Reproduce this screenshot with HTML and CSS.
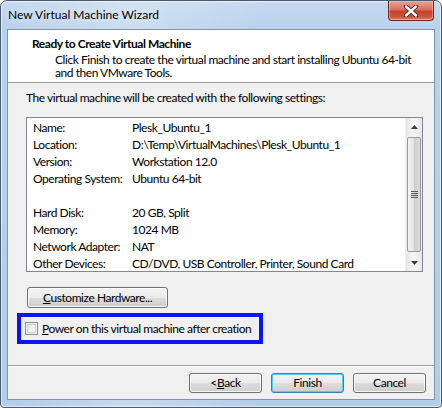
FILE: index.html
```html
<!DOCTYPE html>
<html>
<head>
<meta charset="utf-8">
<link rel="stylesheet" href="styles.css">
</head>
<body>
<div class="window">
  <div class="titlebar">
    <span class="title">New Virtual Machine Wizard</span>
    <div class="close">
      <svg width="16" height="12" viewBox="0 0 16 12">
        <path d="M3 1.5 L13 10.5 M13 1.5 L3 10.5" stroke="#3a2420" stroke-width="4.2" stroke-linecap="round"/>
        <path d="M3 1.5 L13 10.5 M13 1.5 L3 10.5" stroke="#ffffff" stroke-width="2.4" stroke-linecap="round"/>
      </svg>
    </div>
  </div>
  <div class="client">
    <div class="header">
      <div class="h-title">Ready to Create Virtual Machine</div>
      <div class="h-desc">Click Finish to create the virtual machine and start installing Ubuntu 64-bit<br>and then VMware Tools.</div>
    </div>
    <div class="body">
      <div class="intro">The virtual machine will be created with the following settings:</div>
      <div class="listbox">
        <div class="rows">
          <div class="row"><span class="k">Name:</span><span>Plesk_Ubuntu_1</span></div>
          <div class="row"><span class="k">Location:</span><span>D:\Temp\VirtualMachines\Plesk_Ubuntu_1</span></div>
          <div class="row"><span class="k">Version:</span><span>Workstation 12.0</span></div>
          <div class="row"><span class="k">Operating System:</span><span>Ubuntu 64-bit</span></div>
          <div class="row"></div>
          <div class="row"><span class="k">Hard Disk:</span><span>20 GB, Split</span></div>
          <div class="row"><span class="k">Memory:</span><span>1024 MB</span></div>
          <div class="row"><span class="k">Network Adapter:</span><span>NAT</span></div>
          <div class="row"><span class="k">Other Devices:</span><span>CD/DVD, USB Controller, Printer, Sound Card</span></div>
        </div>
        <div class="scrollbar">
          <div class="arrow"><svg width="7" height="4" viewBox="0 0 7 4"><path d="M0 4 L3.5 0 L7 4 Z" fill="#3c3c3c"/></svg></div>
          <div class="thumb">
            <div class="grip"><i></i><i></i><i></i><i></i></div>
          </div>
          <div class="arrow down"><svg width="7" height="4" viewBox="0 0 7 4"><path d="M0 0 L3.5 4 L7 0 Z" fill="#3c3c3c"/></svg></div>
        </div>
      </div>
      <div class="btn custom"><u>C</u>ustomize Hardware...</div>
      <div class="highlight">
        <span class="checkbox"></span>
        <span class="cb-label"><u>P</u>ower on this virtual machine after creation</span>
      </div>
    </div>
    <div class="footer">
      <div class="btn nav">&lt; <u>B</u>ack</div>
      <div class="btn nav default">Finish</div>
      <div class="btn nav">Cancel</div>
    </div>
  </div>
</div>
</body>
</html>
```
FILE: styles.css
```css
* { box-sizing: border-box; }
html, body { margin: 0; padding: 0; background: #ffffff; }
body {
  font-family: Lato, "Noto Sans", sans-serif;
  font-size: 12px;
  color: #000;
}
.window {
  width: 442px;
  height: 408px;
  border: 1px solid #4a5a6e;
  border-radius: 7px 7px 4px 4px;
  background:
    linear-gradient(90deg, rgba(255,255,255,0) 0, rgba(255,255,255,0.25) 30%, rgba(255,255,255,0) 60%),
    linear-gradient(180deg, #c4d9ef 0, #b8d1ec 30px, #b2cde9 100%);
  padding: 0 6px 7px 6px;
  display: flex;
  flex-direction: column;
  box-shadow: inset 0 0 0 1px rgba(255,255,255,0.6);
}
.titlebar {
  height: 28px;
  display: flex;
  align-items: flex-start;
  justify-content: space-between;
}
.title {
  margin-top: 6px;
  margin-left: 1px;
  color: #000;
  text-shadow: 0 0 8px rgba(255,255,255,0.9);
}
.close {
  width: 46px;
  height: 20px;
  margin-right: 1px;
  border: 1px solid #6e2b22;
  border-top: none;
  border-radius: 0 0 4px 4px;
  background: linear-gradient(180deg, #e8a493 0, #d9705d 45%, #c2432c 55%, #d0553c 85%, #e08a70 100%);
  display: flex;
  align-items: center;
  justify-content: center;
  box-shadow: inset 0 0 0 1px rgba(255,200,180,0.5);
}
.client {
  flex: 1;
  border: 1px solid #8394a9;
  background: #f0f0f0;
  display: flex;
  flex-direction: column;
  letter-spacing: -0.45px;
}
.header {
  height: 53px;
  background: #ffffff;
  border-bottom: 1px solid #a0a0a0;
  padding: 6px 0 0 24px;
  white-space: nowrap;
}
.h-title {
  font-weight: bold;
  line-height: 16px;
}
.h-desc {
  padding-left: 23px;
  line-height: 13px;
  margin-top: 1px;
}
.body {
  flex: 1;
  display: flex;
  flex-direction: column;
  align-items: flex-start;
  padding: 7px 10px 0 18px;
}
.intro {
  line-height: 16px;
  white-space: nowrap;
}
.listbox {
  margin-top: 11px;
  width: 397px;
  height: 155px;
  border: 1px solid #828790;
  background: #ffffff;
  display: flex;
}
.rows {
  flex: 1;
  padding: 1px 0 0 6px;
}
.row {
  height: 17px;
  line-height: 17px;
  display: flex;
  white-space: nowrap;
}
.k { width: 99px; flex-shrink: 0; }
.scrollbar {
  width: 17px;
  display: flex;
  flex-direction: column;
  background: linear-gradient(90deg, #e6e6e6, #f4f4f4 40%, #f4f4f4 60%, #e6e6e6);
  border-left: 1px solid #efefef;
}
.arrow {
  height: 17px;
  display: flex;
  align-items: center;
  justify-content: center;
}
.thumb {
  flex: 1;
  margin: 2px 1px;
  border: 1px solid #9a9a9a;
  border-radius: 2px;
  background: linear-gradient(90deg, #f4f4f4 0, #e4e4e4 45%, #cfcfcf 55%, #dcdcdc 100%);
  display: flex;
  align-items: center;
  justify-content: center;
}
.grip { display: flex; flex-direction: column; gap: 1px; }
.grip i {
  display: block;
  width: 7px;
  height: 1px;
  background: #5a5a5a;
}
.btn {
  height: 21px;
  border: 1px solid #707070;
  border-radius: 3px;
  background: linear-gradient(180deg, #f2f2f2 0, #ebebeb 50%, #dddddd 51%, #cfcfcf 100%);
  box-shadow: inset 0 0 0 1px rgba(255,255,255,0.8);
  display: flex;
  align-items: center;
  justify-content: center;
  line-height: 16px;
  white-space: nowrap;
}
.custom {
  margin-top: 15px;
  margin-left: 1px;
  width: 141px;
}
.highlight {
  margin-top: 5px;
  margin-left: -9px;
  width: 246px;
  height: 31px;
  border: 4px solid #0a14f5;
  display: flex;
  align-items: center;
  padding-left: 4px;
}
.cb-label { white-space: nowrap; }
.checkbox {
  width: 13px;
  height: 13px;
  flex-shrink: 0;
  border: 1px solid #8e8f8f;
  background: linear-gradient(135deg, #dcdcdc 0, #f2f2f2 50%, #ffffff 100%);
  box-shadow: inset 0 0 0 1px #f4f4f4, inset 0 0 0 2px #cdcdcd;
  margin-right: 4px;
}
.footer {
  height: 34px;
  border-top: 1px solid #a0a0a0;
  box-shadow: inset 0 1px 0 #ffffff;
  display: flex;
  justify-content: flex-end;
  gap: 9px;
  padding: 7px 8px 0 0;
}
.nav { width: 73px; height: 20px; }
.default {
  border-color: #3c7fb1;
  box-shadow: inset 0 0 0 1px #48d2f6;
}
u { text-decoration: underline; text-underline-offset: 1px; }
```
